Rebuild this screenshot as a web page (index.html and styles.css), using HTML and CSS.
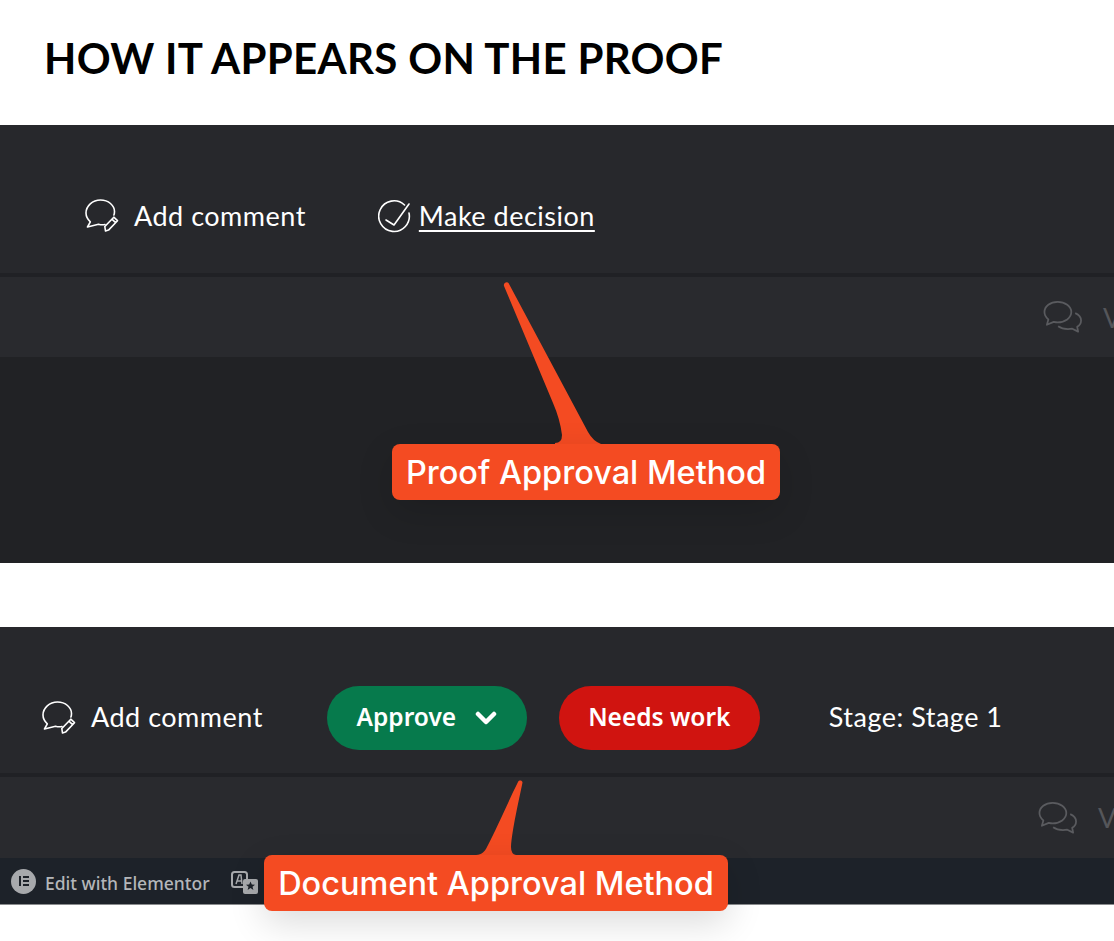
FILE: index.html
```html
<!DOCTYPE html>
<html lang="en">
<head>
<meta charset="utf-8">
<title>How it appears on the proof</title>
<link rel="stylesheet" href="styles.css">
</head>
<body>
<header class="head"><h1 class="title">HOW IT APPEARS ON THE PROOF</h1></header>

<section class="panel panel-proof">
  <div class="toolbar toolbar-proof">
    <div class="action">
      <svg class="ico-comment" viewBox="0 0 34 34" fill="none" stroke="#fff" stroke-width="1.6" stroke-linecap="round" stroke-linejoin="round"><path d="M20 25.500c-2 .4-4.500.3-6.500-.3L2.500 28l2.800-5.200C2.800 20.500 1 17.300 1 14 1 7 7.500 1 15.500 1S29.500 6.500 29.500 12.500c0 1.400-.2 2.500-.6 3.500"/><path d="M20.500 32l-.7-4.500 9-9.300 3.700 3.500-9 9.400zM26.900 20.200l3.700 3.500"/></svg>
      <span class="label">Add comment</span>
    </div>
    <div class="action action-decision">
      <svg class="ico-check" viewBox="0 0 34 34" fill="none" stroke="#fff" stroke-width="1.600" stroke-linecap="round" stroke-linejoin="round"><path d="M26.500 6A15.300 15.300 0 1 0 31 14"/><path d="M8 21l8 5L31 5"/></svg>
      <span class="label label-link">Make decision</span>
    </div>
  </div>
  <div class="rule"></div>
  <div class="subbar">
    <svg class="ico-chat" viewBox="0 0 42 34" fill="none" stroke="#5a5b5f" stroke-width="1.800" stroke-linejoin="round"><path d="M15 1.500C7.500 1.500 1.500 5.800 1.500 12c0 3 1.500 5.600 4 7.500L4 25l7-3c1.300.3 2.700.5 4 .5 7.500 0 14-4.500 14-10.500S22.500 1.500 15 1.500z"/><path d="M33 13c4 1.800 6 4.500 6 7.500 0 2.700-1.500 5-4 6.500l1 5-6-3c-5 .7-11 0-14.500-2.500"/></svg>
    <span class="subbar-text">View all</span>
  </div>
  <div class="stage"></div>
  <svg class="tail tail-proof" viewBox="0 0 100 165"><path fill="#f44b22" d="M1 5C0 2 4 0 5.500 2L85 151Q90 160 98 163V165H52V162Q59 162 59 154Q57 138 50 122z"/></svg>
  <div class="callout callout-proof">Proof Approval Method</div>
</section>

<section class="panel panel-doc">
  <div class="toolbar toolbar-doc">
    <div class="action">
      <svg class="ico-comment" viewBox="0 0 34 34" fill="none" stroke="#fff" stroke-width="1.600" stroke-linecap="round" stroke-linejoin="round"><path d="M20 25.500c-2 .4-4.500.3-6.500-.3L2.500 28l2.800-5.200C2.800 20.500 1 17.300 1 14 1 7 7.500 1 15.500 1S29.500 6.500 29.500 12.500c0 1.400-.2 2.500-.6 3.500"/><path d="M20.500 32l-.7-4.500 9-9.300 3.700 3.500-9 9.400zM26.900 20.200l3.700 3.500"/></svg>
      <span class="label label-doc">Add comment</span>
    </div>
    <div class="btn btn-approve"><span class="btn-text">Approve</span>
      <svg class="ico-chevron" viewBox="0 0 22 14" fill="none" stroke="#fff" stroke-width="4.500" stroke-linecap="round" stroke-linejoin="round"><path d="M3 3l8 8 8-8"/></svg>
    </div>
    <div class="btn btn-work"><span class="btn-text">Needs work</span></div>
    <span class="label label-stage label-doc">Stage: Stage 1</span>
  </div>
  <div class="rule"></div>
  <div class="subbar subbar-doc">
    <svg class="ico-chat" viewBox="0 0 42 34" fill="none" stroke="#5a5b5f" stroke-width="1.800" stroke-linejoin="round"><path d="M15 1.500C7.500 1.500 1.500 5.800 1.500 12c0 3 1.500 5.600 4 7.500L4 25l7-3c1.300.3 2.700.5 4 .5 7.500 0 14-4.500 14-10.500S22.500 1.500 15 1.500z"/><path d="M33 13c4 1.800 6 4.500 6 7.500 0 2.700-1.500 5-4 6.500l1 5-6-3c-5 .7-11 0-14.500-2.500"/></svg>
    <span class="subbar-text">View all</span>
  </div>
  <div class="adminbar">
    <span class="el-logo"><i class="el-bar"></i><span class="el-lines"><i></i><i></i><i></i></span></span>
    <span class="adminbar-text">Edit with Elementor</span>
    <svg class="ico-translate" viewBox="0 0 28 24"><rect x="1" y="1" width="15" height="15" rx="2.500" fill="none" stroke="#a7a9ac" stroke-width="2"/><path d="M5 13l3-9h2l1 9M6.500 10h4" fill="none" stroke="#a7a9ac" stroke-width="1.500"/><rect x="12" y="8" width="15" height="15" rx="2" fill="#a7a9ac"/><path d="M19.500 10.500l1.300 3 3.200.2-2.500 2 .9 3.200-2.900-1.800-2.900 1.800.9-3.200-2.500-2 3.200-.2z" fill="#1d2229"/></svg>
  </div>
  <div class="page-end"></div>
  <svg class="tail tail-doc" viewBox="0 0 50 80"><path fill="#f44b22" d="M42 2c1-2 4-2 4.500.5C43 20 36 50 35 67q0 7 5 8V80H0V75c6 0 9-4 11-8C20 50 32 22 42 2z"/></svg>
  <div class="callout callout-doc">Document Approval Method</div>
</section>
</body>
</html>
```

FILE: styles.css
```css
* { box-sizing: border-box; }
html, body { margin: 0; padding: 0; background: #fff; }
body { width: 1114px; height: 941px; overflow: hidden; font-family: "Lato", sans-serif; }
.head { height: 125px; padding: 31px 0 0 44px; }
.title { margin: 0; font-family: "Lato", sans-serif; font-weight: 700; font-size: 42px; line-height: 55px; letter-spacing: .3px; color: #000; white-space: nowrap; }
.panel { position: relative; overflow: visible; }
.panel-proof { height: 438px; margin-bottom: 64px; }
.toolbar { display: flex; align-items: center; background: #27282c; height: 148px; color: #fff; }
.toolbar-proof { padding: 34px 0 0 85px; gap: 72px; }
.toolbar-doc { height: 146px; padding: 35px 0 0 42px; }
.action { display: flex; align-items: center; gap: 15px; }
.action-decision { gap: 7px; }
.label { font-size: 27px; line-height: 32px; letter-spacing: .5px; white-space: nowrap; }
.label-doc { padding-bottom: 2px; }
.label-link { text-decoration: underline; text-underline-offset: 4px; text-decoration-thickness: 2px; }
.label-stage { margin-left: 69px; }
.ico-comment { width: 34px; height: 34px; flex: none; }
.ico-check { width: 34px; height: 34px; flex: none; }
.rule { height: 4px; background: #202125; }
.subbar { height: 80px; background: #292a2e; display: flex; align-items: center; padding-left: 1043px; gap: 19px; overflow: hidden; }
.subbar-doc { height: 81px; padding-left: 1038px; }
.ico-chat { width: 41px; height: 34px; flex: none; }
.subbar-text { font-size: 27px; color: #55565a; white-space: nowrap; }
.stage { height: 206px; background: #212225; }
.btn { display: flex; align-items: center; justify-content: center; height: 64px; border-radius: 32px; color: #fff; font-family: "Noto Sans", sans-serif; font-weight: 600; font-size: 24.5px; white-space: nowrap; }
.btn-text { padding-bottom: 3px; }
.btn-approve { width: 200px; margin-left: 64px; background: #067a4c; gap: 19px; }
.btn-work { width: 201px; margin-left: 32px; background: #d01410; }
.ico-chevron { width: 22px; height: 14px; flex: none; }
.adminbar { height: 47px; background: #1d2229; display: flex; align-items: center; padding-left: 11px; color: #b4b6b9; border-bottom: 1px solid #8a8c8e; }
.el-logo { width: 25px; height: 25px; border-radius: 50%; background: #a7a9ac; display: flex; align-items: center; justify-content: center; gap: 2px; flex: none; }
.el-bar { width: 2px; height: 10px; background: #1d2229; display: block; }
.el-lines { display: flex; flex-direction: column; gap: 2px; }
.el-lines i { width: 6px; height: 2px; background: #1d2229; display: block; }
.adminbar-text { margin-left: 9px; padding-top: 3px; font-family: "Noto Sans", sans-serif; font-size: 17.5px; font-weight: 500; white-space: nowrap; }
.ico-translate { width: 28px; height: 24px; margin: 3px 0 0 21px; flex: none; }
.page-end { height: 36px; background: #fff; }
.callout { position: absolute; display: flex; align-items: center; justify-content: center; height: 56px; border-radius: 8px; background: #f44b22; color: #fff; font-family: "Inter", sans-serif; font-weight: 500; font-size: 32.5px; white-space: nowrap; box-shadow: 0 12px 36px rgba(0,0,0,.14); }
.callout-proof { left: 392px; top: 319px; width: 388px; }
.callout-doc { left: 264px; top: 228px; width: 464px; }
.tail { position: absolute; }
.tail-proof { left: 503px; top: 156px; width: 100px; height: 165px; }
.tail-doc { left: 476px; top: 153px; width: 50px; height: 80px; }
```
